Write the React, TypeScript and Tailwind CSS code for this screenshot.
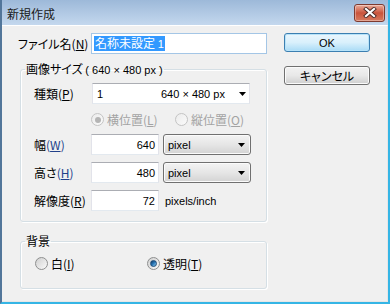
import React from "react";

type RState = "off" | "on" | "disOn" | "disOff";

const LAT = "font-['Liberation_Sans',sans-serif] text-[11px]";

function RadioDot({ state }: { state: RState }) {
  const disabled = state === "disOn" || state === "disOff";
  return (
    <span
      className={
        "w-[13px] h-[13px] rounded-full border flex items-center justify-center shrink-0 " +
        (disabled
          ? "border-[#c4c4c4] bg-linear-to-br from-[#ececec] to-[#fafafa]"
          : "border-[#8e8f8f] bg-linear-to-br from-[#cfcfcf] to-[#fbfbfb]")
      }
    >
      {state === "on" && (
        <span className="w-[7px] h-[7px] rounded-full border border-[#1b4a78] bg-linear-to-br from-[#0d3a66] via-[#2a78b8] to-[#8fd0f2]" />
      )}
      {state === "disOn" && <span className="w-[6px] h-[6px] rounded-full bg-[#b4b4b4]" />}
    </span>
  );
}

function Arrow() {
  return (
    <svg width="7" height="4" viewBox="0 0 7 4" className="shrink-0">
      <polygon points="0,0 7,0 3.5,4" fill="#000" />
    </svg>
  );
}

function U({ c, cls = "" }: { c: string; cls?: string }) {
  return (
    <span className={cls}>
      (<span className="underline underline-offset-[1px]">{c}</span>)
    </span>
  );
}

function TextBox({ value, w }: { value: string; w: string }) {
  return (
    <div
      className={
        w +
        " h-[21px] bg-white border border-[#e2e3ea] border-t-[#abadb3] border-b-[#e3e9ef] flex items-center justify-end pr-[3px] font-['Liberation_Sans',sans-serif] text-[11px]"
      }
    >
      {value}
    </div>
  );
}

function ButtonSelect({ value }: { value: string }) {
  return (
    <div className="ml-[4px] w-[88px] h-[21px] rounded-[3px] border border-[#707070] bg-linear-to-b from-[#f3f3f3] via-[#e6e6e6] to-[#d3d3d3] shadow-[inset_0_0_0_1px_#fbfbfb] flex items-center pl-[4px] pr-[5px]">
      <span className={LAT}>{value}</span>
      <span className="ml-auto flex">
        <Arrow />
      </span>
    </div>
  );
}

export default function App() {
  return (
    <div className="w-[390px] h-[304px] flex flex-col bg-[#f0f0f0] border-l-2 border-l-[#52769a] border-r-2 border-r-[#35b5e5] border-b-2 border-b-[#35b5e5] font-['Noto_Sans_CJK_JP',sans-serif] [font-feature-settings:'palt'] text-[12px] leading-[14px] text-black overflow-hidden">
      {/* title bar */}
      <div className="h-[25px] shrink-0 flex items-center bg-linear-to-b from-[#9db9d9] to-[#c4d8ee] pl-[5px] pr-[3px]">
        <span className="pt-[3px] text-[12px] text-[#1a1a1a]">新規作成</span>
        <div className="ml-auto w-[31px] h-[18px] rounded-[3px] border border-[#7d3a30] bg-linear-to-b from-[#e9ab9b] via-[#c9533b] to-[#d77a5f] shadow-[inset_0_0_0_1px_rgba(255,255,255,0.35)] flex items-center justify-center">
          <svg width="14" height="11" viewBox="0 0 14 11">
            <path d="M3 2 L11 9 M11 2 L3 9" stroke="#4a2a26" strokeWidth="4" strokeLinecap="square" />
            <path d="M3 2 L11 9 M11 2 L3 9" stroke="#ffffff" strokeWidth="2.2" strokeLinecap="square" />
          </svg>
        </div>
      </div>

      {/* client */}
      <div className="flex-1 flex border-t border-t-white border-r border-r-[#e6e6e6] border-b border-b-[#e6e6e6] pl-[16px] pt-[7px]">
        {/* left column */}
        <div className="w-[249px] flex flex-col">
          <div className="flex items-center h-[21px]">
            <span className="w-[73px] shrink-0">
              ファイル名<U c="N" />
            </span>
            <div className="w-[176px] h-[21px] bg-white border border-[#a4c6e6] flex items-center pl-[2px]">
              <span className="bg-[#3399ff] text-white leading-[14px] px-[1px]">
                名称未設定 <span className={LAT}>1</span>
              </span>
            </div>
          </div>

          {/* 画像サイズ group */}
          <fieldset className="mt-[8px] ml-[2px] w-[247px] border border-[#d5dfe5] rounded-[3px] shadow-[inset_1px_1px_0_#ffffff,1px_1px_0_#ffffff] pt-[6px] pb-[10px]">
            <legend className="ml-[4px] px-[1px] leading-[14px]">
              画像サイズ <span className={LAT}>( 640 × 480 px )</span>
            </legend>
            <div className="pl-[13px] flex flex-col">
              <div className="flex items-center h-[21px]">
                <span className="w-[57px] shrink-0">
                  種類<U c="P" />
                </span>
                <div className="ml-[1px] w-[158px] h-[21px] bg-white border border-[#e2e3ea] border-t-[#abadb3] border-b-[#e3e9ef] flex items-center pl-[4px] pr-[3px]">
                  <span className={"w-[64px] shrink-0 " + LAT}>1</span>
                  <span className={LAT}>640 × 480 px</span>
                  <span className="ml-auto flex">
                    <Arrow />
                  </span>
                </div>
              </div>

              <div className="mt-[8px] h-[15px] flex items-center pl-[57px] text-[#a3a3a3]">
                <div className="w-[84px] flex items-center gap-[3px]">
                  <RadioDot state="disOn" />
                  <span>
                    横位置<U c="L" />
                  </span>
                </div>
                <div className="flex items-center gap-[3px]">
                  <RadioDot state="disOff" />
                  <span>
                    縦位置<U c="O" />
                  </span>
                </div>
              </div>

              <div className="mt-[7px] flex items-center h-[21px]">
                <span className="w-[57px] shrink-0">
                  幅<U c="W" cls="text-[#22408a]" />
                </span>
                <TextBox value="640" w="w-[68px]" />
                <ButtonSelect value="pixel" />
              </div>

              <div className="mt-[7px] flex items-center h-[21px]">
                <span className="w-[57px] shrink-0">
                  高さ<U c="H" cls="text-[#22408a]" />
                </span>
                <TextBox value="480" w="w-[68px]" />
                <ButtonSelect value="pixel" />
              </div>

              <div className="mt-[7px] flex items-center h-[21px]">
                <span className="w-[57px] shrink-0">
                  解像度<U c="R" />
                </span>
                <TextBox value="72" w="w-[68px]" />
                <span className={"ml-[6px] " + LAT}>pixels/inch</span>
              </div>
            </div>
          </fieldset>

          {/* 背景 group */}
          <fieldset className="mt-[12px] ml-[2px] w-[247px] border border-[#d5dfe5] rounded-[3px] shadow-[inset_1px_1px_0_#ffffff,1px_1px_0_#ffffff] pt-[8px] pb-[17px]">
            <legend className="ml-[4px] px-[1px] leading-[14px]">背景</legend>
            <div className="pl-[14px] flex items-center h-[15px]">
              <div className="w-[112px] flex items-center gap-[3px]">
                <RadioDot state="off" />
                <span>
                  白<U c="I" />
                </span>
              </div>
              <div className="flex items-center gap-[3px]">
                <RadioDot state="on" />
                <span>
                  透明<U c="T" />
                </span>
              </div>
            </div>
          </fieldset>
        </div>

        {/* right column */}
        <div className="ml-[17px] w-[86px] flex flex-col">
          <div className="h-[19px] rounded-[3px] border border-[#3c7fb1] bg-linear-to-b from-[#eaf6fd] via-[#d9f0fc] to-[#a9dbf6] shadow-[inset_0_0_0_1px_#b8e3f9] flex items-center justify-center">
            <span className={LAT}>OK</span>
          </div>
          <div className="mt-[14px] h-[19px] rounded-[3px] border border-[#707070] bg-linear-to-b from-[#f2f2f2] via-[#e8e8e8] to-[#cfcfcf] shadow-[inset_0_0_0_1px_#fbfbfb] flex items-center justify-center">
            キャンセル
          </div>
        </div>
      </div>
    </div>
  );
}
